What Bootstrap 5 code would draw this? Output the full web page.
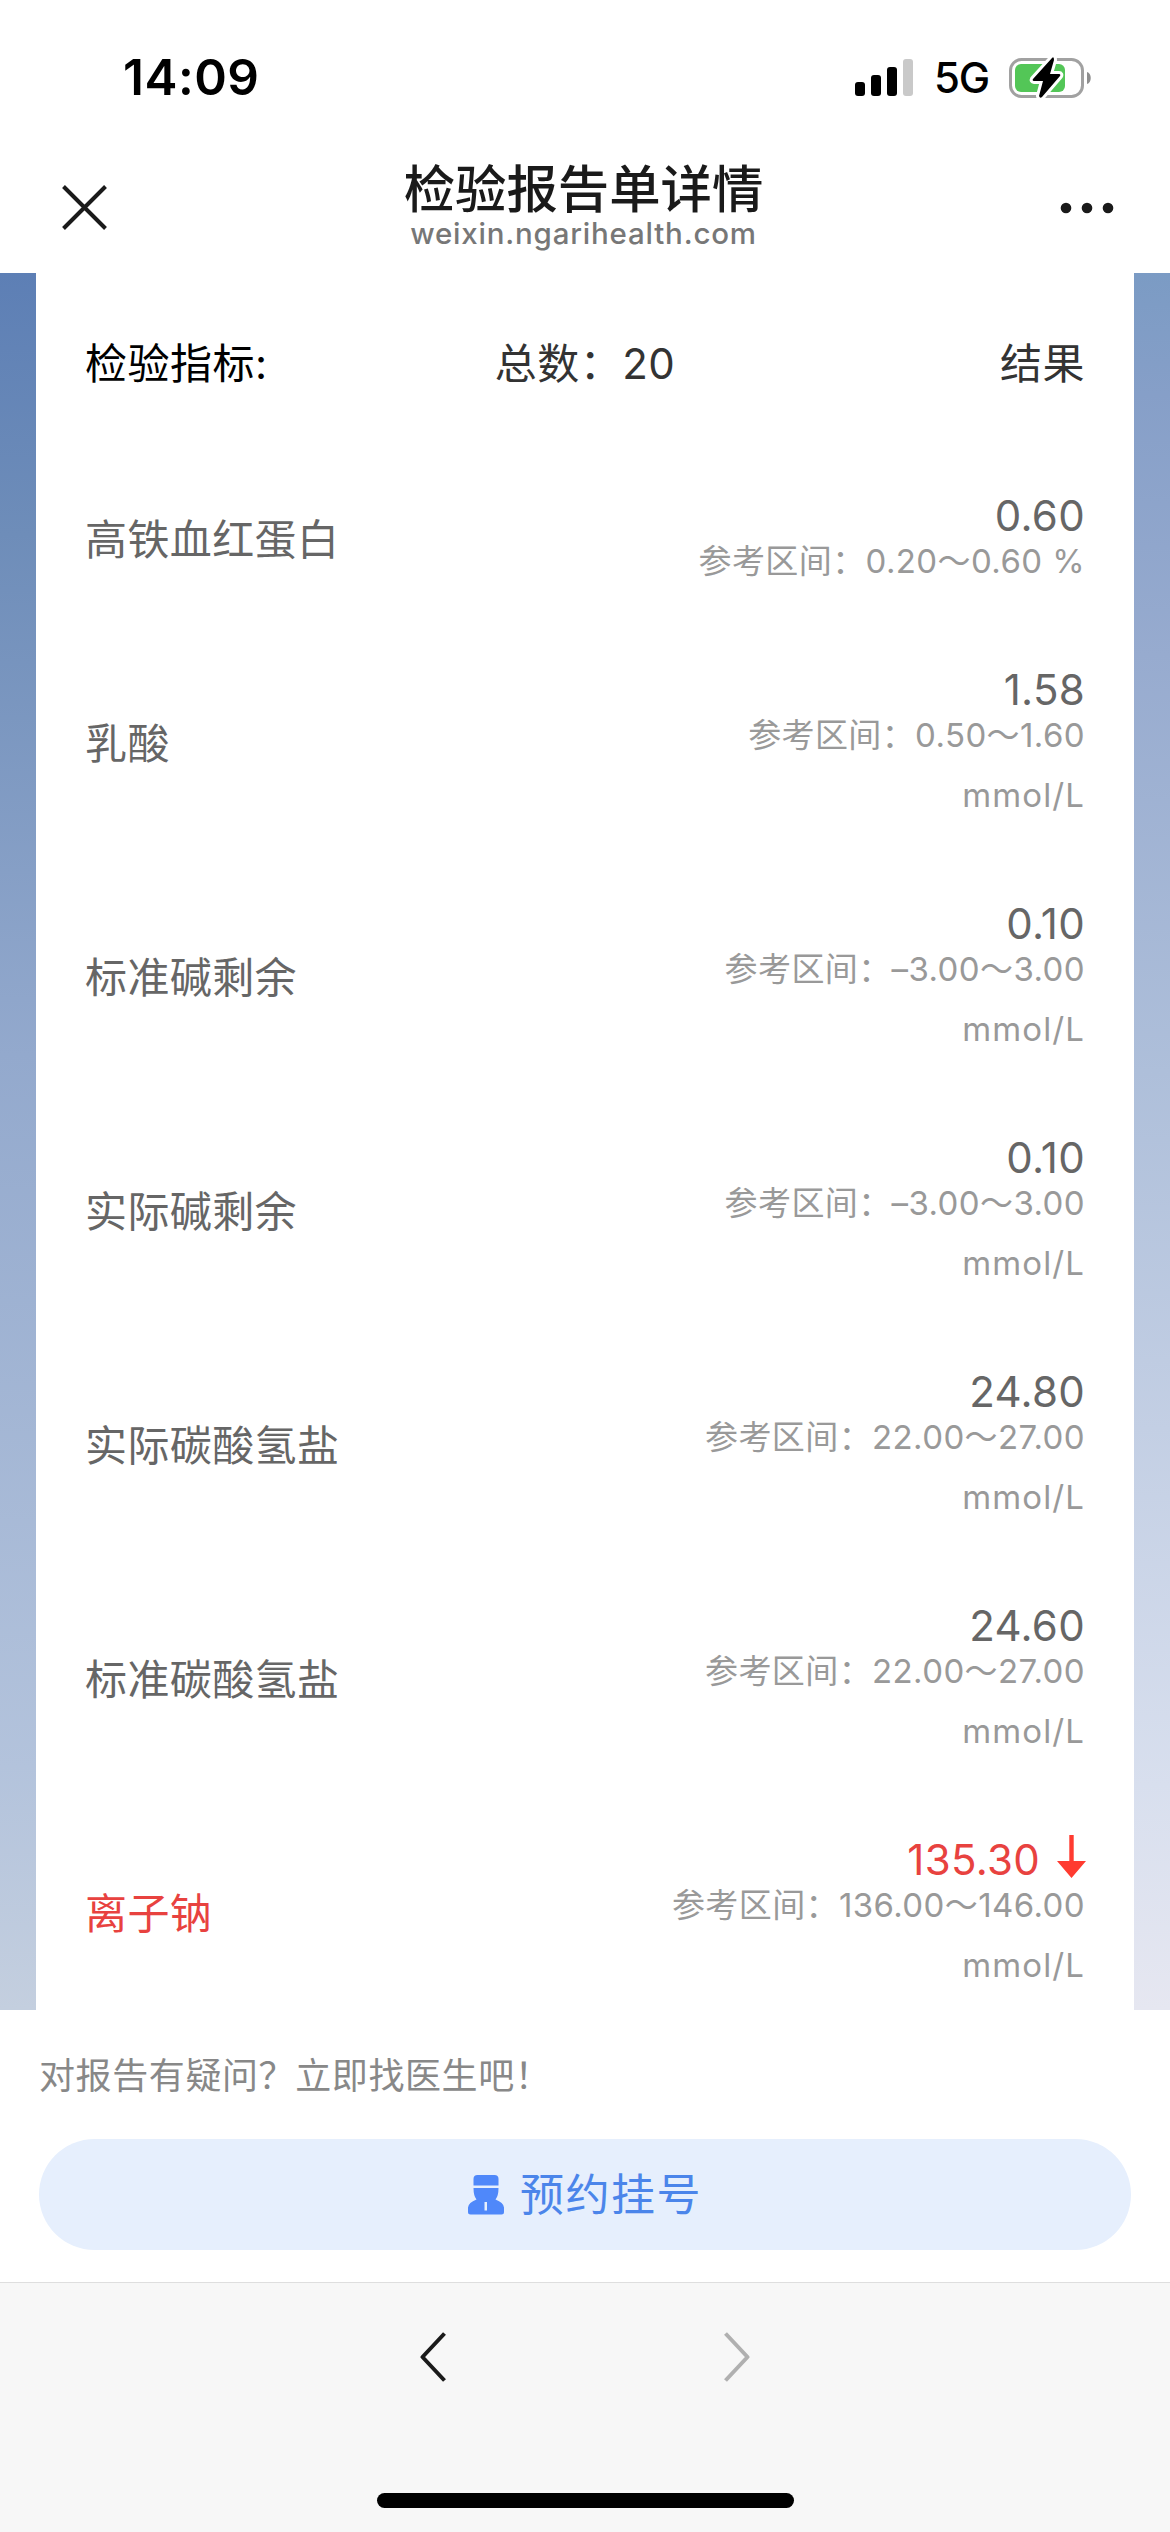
<!DOCTYPE html>
<html lang="zh-CN">
<head>
<meta charset="utf-8">
<meta name="viewport" content="width=device-width, initial-scale=1">
<title>检验报告单详情</title>
<link href="https://cdn.jsdelivr.net/npm/bootstrap@5.3.0/dist/css/bootstrap.min.css" rel="stylesheet">
<style>
body{font-family:Inter,"Noto Sans CJK SC",sans-serif;background:#fff;color:#333;height:2532px;overflow:hidden}
svg{display:block;flex:none}
.status{height:142px;padding:14px 78px 0 123px}
.clock{font-size:49.5px;font-weight:600;color:#000;line-height:1;letter-spacing:.5px}
.net{font-size:42px;color:#000;line-height:1;font-weight:450;letter-spacing:-1.2px;margin:0 20px 0 20px}
.titlebar{height:131px;padding:0 56px 0 62px}
.page-title{font-size:51.4px;line-height:50px;font-weight:500;color:#1a1a1a}
.host{font-size:29.5px;line-height:38px;color:#777;font-weight:450;letter-spacing:.8px}
.report{height:1737px;padding:0 36px;overflow:hidden;
 background:linear-gradient(#5d7fb5,#6e8db9 15%,#93a9cd 45%,#b3c3dc 86%,#c4cfdf) 0 0/36px 100% no-repeat,
 linear-gradient(#7b9bc4,#869fc8 7%,#97abcf 22%,#aebfda 46%,#d8dfee 87%,#e6e7f1) 100% 0/36px 100% no-repeat}
.sheet{height:100%;padding:0 49px}
.heads{height:178px;font-size:42px;letter-spacing:.5px;padding-top:2px}
.heads>*{flex:1 1 0}
.item{height:234px;font-size:42px;color:#666}
.item.short{height:174px}
.item .name{letter-spacing:.4px;padding-top:2px}
.val{height:30px;line-height:30px;margin-top:16px;letter-spacing:.3px}
.ref,.unit{font-size:33px;line-height:60px;color:#999;letter-spacing:.4px}
.unit{letter-spacing:1.1px}
.item.abn .name,.item.abn .val{color:#e8423f}
.down{margin:-7px -1px 0 17px}
.ask{height:272px;padding:48px 39px 0}
.ask p{font-size:36px;line-height:36px;color:#888;letter-spacing:.6px;margin-bottom:45px}
.book{height:111px;background:#e6effd;color:#4b85ea;font-size:44px;letter-spacing:1.5px;border-radius:56px;border:0;line-height:1}
.tools{height:250px;background:#f7f7f7;border-top:1px solid #dedede;padding-top:49px}
.arrows{gap:278px}
.homebar{width:417px;height:15px;border-radius:8px;background:#000;margin-top:111px}
</style>
</head>
<body>
<header>
  <div class="status d-flex justify-content-between align-items-center">
    <div class="clock">14:09</div>
    <div class="d-flex align-items-center">
      <svg width="59" height="38" viewBox="0 0 59 38"><rect y="23" width="10" height="14" rx="3"/><rect x="16" y="16" width="10" height="21" rx="3"/><rect x="32" y="8" width="10" height="29" rx="3"/><rect x="48" width="10" height="37" rx="3" fill="#c9c9c9"/></svg>
      <div class="net">5G</div>
      <svg width="83" height="42" viewBox="0 0 83 42"><rect x="1.5" y="2.5" width="72" height="37" rx="11" fill="#fff" stroke="#a1a1a1" stroke-width="3"/><rect x="6" y="7" width="50" height="28" rx="6" fill="#53c657"/><path d="M78 15c5 1 5 11 0 12z" fill="#8e8e8e"/><path d="M43 1 24 22q-1 2 1 2h9l-4 15q1 3 3 1l18-21q1-2-1-2h-9l4-14q0-4-2-2z" stroke="#fff" stroke-width="6"/><path d="M43 1 24 22q-1 2 1 2h9l-4 15q1 3 3 1l18-21q1-2-1-2h-9l4-14q0-4-2-2z"/></svg>
    </div>
  </div>
  <div class="titlebar d-flex justify-content-between align-items-center">
    <svg width="45" height="45" viewBox="0 0 45 45" fill="none" stroke="#1a1a1a" stroke-width="4"><path d="M1.5 1.5l42 42m0-42-42 42"/></svg>
    <div class="text-center"><div class="page-title">检验报告单详情</div><div class="host">weixin.ngarihealth.com</div></div>
    <svg width="54" height="12" viewBox="0 0 54 12" fill="#1a1a1a"><circle cx="6" cy="6" r="5.3"/><circle cx="27" cy="6" r="5.3"/><circle cx="48" cy="6" r="5.3"/></svg>
  </div>
</header>
<main class="report">
  <div class="sheet bg-white">
    <div class="heads d-flex align-items-center"><div class="text-black">检验指标:</div><div class="text-center">总数：20</div><div class="text-end">结果</div></div>
    <div class="item short d-flex justify-content-between align-items-center"><div class="name">高铁血红蛋白</div><div class="text-end"><div class="val">0.60</div><div class="ref">参考区间：0.20～0.60 %</div></div></div>
    <div class="item d-flex justify-content-between align-items-center"><div class="name">乳酸</div><div class="text-end"><div class="val">1.58</div><div class="ref">参考区间：0.50～1.60</div><div class="unit">mmol/L</div></div></div>
    <div class="item d-flex justify-content-between align-items-center"><div class="name">标准碱剩余</div><div class="text-end"><div class="val">0.10</div><div class="ref">参考区间：–3.00～3.00</div><div class="unit">mmol/L</div></div></div>
    <div class="item d-flex justify-content-between align-items-center"><div class="name">实际碱剩余</div><div class="text-end"><div class="val">0.10</div><div class="ref">参考区间：–3.00～3.00</div><div class="unit">mmol/L</div></div></div>
    <div class="item d-flex justify-content-between align-items-center"><div class="name">实际碳酸氢盐</div><div class="text-end"><div class="val">24.80</div><div class="ref">参考区间：22.00～27.00</div><div class="unit">mmol/L</div></div></div>
    <div class="item d-flex justify-content-between align-items-center"><div class="name">标准碳酸氢盐</div><div class="text-end"><div class="val">24.60</div><div class="ref">参考区间：22.00～27.00</div><div class="unit">mmol/L</div></div></div>
    <div class="item abn d-flex justify-content-between align-items-center"><div class="name">离子钠</div><div class="text-end"><div class="val d-flex justify-content-end align-items-center">135.30<svg class="down" width="29" height="43" viewBox="0 0 29 43" fill="#ff3b30"><path d="M12.3 0h4.400v26H29L14.500 43 0 26h12.300z"/></svg></div><div class="ref">参考区间：136.00～146.00</div><div class="unit">mmol/L</div></div></div>
  </div>
</main>
<section class="ask bg-white">
  <p>对报告有疑问？立即找医生吧！</p>
  <button type="button" class="book w-100 d-flex justify-content-center align-items-center">
    <svg class="me-3" width="36" height="40" viewBox="0 0 36 40" fill="#4f88fa"><path d="M9.500 0h17q4 0 4 4v6.500H5.500V4q0-4 4-4z"/><path fill-rule="evenodd" d="M5.500 13h25q0 8-3 11.500 8 3 8.500 8V37q0 2.500-2.500 2.500h-31Q0 39.500 0 37v-4.500q.5-5 8.500-8Q5.500 21 5.500 13zM16.500 27v8.500h2.500V27z"/></svg>
    <span>预约挂号</span>
  </button>
</section>
<footer class="tools d-flex flex-column align-items-center">
  <div class="arrows d-flex">
    <svg width="26" height="50" viewBox="0 0 26 50" fill="none" stroke="#1a1a1a" stroke-width="4" stroke-linejoin="round"><path d="M24.500 1.500 2.500 25l22 23.500"/></svg>
    <svg width="26" height="50" viewBox="0 0 26 50" fill="none" stroke="#b0b0b0" stroke-width="4" stroke-linejoin="round"><path d="M1.500 1.500l22 23.500-22 23.500"/></svg>
  </div>
  <div class="homebar"></div>
</footer>
<script src="https://cdn.jsdelivr.net/npm/bootstrap@5.3.0/dist/js/bootstrap.bundle.min.js"></script>
</body>
</html>
